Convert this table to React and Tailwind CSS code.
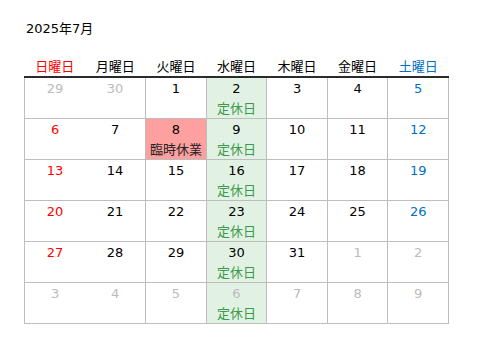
import React from 'react'

const heads = ['日曜日', '月曜日', '火曜日', '水曜日', '木曜日', '金曜日', '土曜日']

// [day, outside month]
const weeks = [
  [[29, 1], [30, 1], [1], [2], [3], [4], [5]],
  [[6], [7], [8], [9], [10], [11], [12]],
  [[13], [14], [15], [16], [17], [18], [19]],
  [[20], [21], [22], [23], [24], [25], [26]],
  [[27], [28], [29], [30], [31], [1, 1], [2, 1]],
  [[3, 1], [4, 1], [5, 1], [6, 1], [7, 1], [8, 1], [9, 1]],
]

function headColor(i) {
  if (i === 0) return 'text-[#ff0000]'
  if (i === 6) return 'text-[#0070c9]'
  return 'text-black'
}

function Cell({ day, out, col, row }) {
  const rinji = row === 1 && col === 2
  const wed = col === 3
  let color = 'text-black'
  if (out) color = 'text-[#bbbbbb]'
  else if (col === 0) color = 'text-[#ff0000]'
  else if (col === 6) color = 'text-[#0070c9]'

  let border = 'border border-[#bdbdbd]'
  if (col === 0) border += ' border-r-0'
  if (col === 1) border += ' border-l-0'
  if (row === 0) border += ' border-t-0'

  const bg = rinji ? 'bg-[#ffa0a0]' : wed ? 'bg-[#e1f2e4]' : 'bg-white'

  return (
    <td className={`${border} ${bg} h-[41px] p-0 align-top text-center`}>
      <div className={`leading-[21px] ${color}`}>{day}</div>
      {wed && <div className="leading-[19px] text-[#3c9a4a]">定休日</div>}
      {rinji && <div className="leading-[19px] text-[#222]">臨時休業</div>}
    </td>
  )
}

export default function App() {
  return (
    <div
      className="w-[482px] h-[354px] bg-white pt-[20px] pl-[24px] text-[13px]"
      style={{ fontFamily: '"DejaVu Sans", "Noto Sans CJK JP", sans-serif' }}
    >
      <div className="ml-[2px] leading-[18px] text-black">2025年7月</div>
      <table className="mt-[20px] w-[425px] border-collapse table-fixed">
        <thead>
          <tr>
            {heads.map((h, i) => (
              <th
                key={h}
                className={`h-[18px] p-0 font-normal leading-[18px] border-b-2 border-[#2b2b2b] ${headColor(i)}`}
              >
                {h}
              </th>
            ))}
          </tr>
        </thead>
        <tbody>
          {weeks.map((w, r) => (
            <tr key={r}>
              {w.map(([d, out], c) => (
                <Cell key={c} day={d} out={out} col={c} row={r} />
              ))}
            </tr>
          ))}
        </tbody>
      </table>
    </div>
  )
}
